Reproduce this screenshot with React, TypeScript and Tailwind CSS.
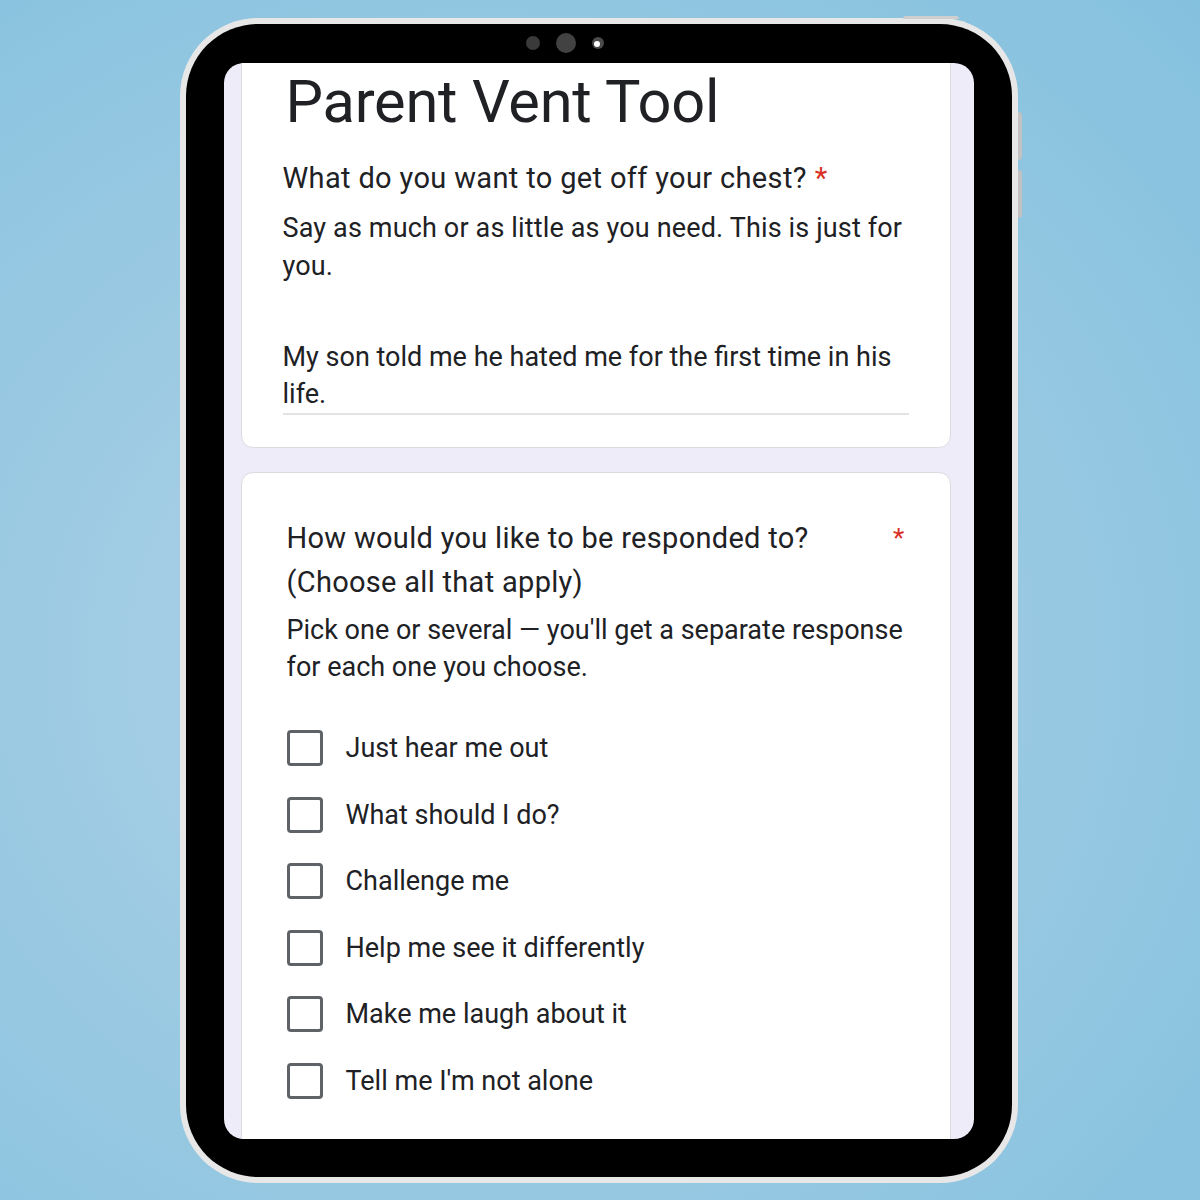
import React from 'react'

const options = [
  'Just hear me out',
  'What should I do?',
  'Challenge me',
  'Help me see it differently',
  'Make me laugh about it',
  "Tell me I'm not alone",
]

function Checkbox() {
  return <span className="block w-[36px] h-[36px] shrink-0 rounded-[4px] border-[3px] border-[#5f6368] bg-white" />
}

export default function App() {
  return (
    <div
      className="w-[1200px] h-[1200px] flex items-center justify-center bg-[radial-gradient(ellipse_at_40%_55%,#b2d3e7_0%,#9ccae3_45%,#84c1de_100%)]"
      style={{ fontFamily: 'Roboto, "Noto Sans", Arial, sans-serif' }}
    >
      <div className="relative w-[838px] h-[1165px] mt-[1px] mr-[3px] rounded-[78px] bg-[#e7e7e7] p-[6px]">
        {/* hardware buttons */}
        <span className="absolute right-[-4px] top-[94px] w-[4px] h-[48px] rounded-r bg-[#c2c2c2]" />
        <span className="absolute right-[-4px] top-[152px] w-[4px] h-[48px] rounded-r bg-[#c2c2c2]" />
        <span className="absolute left-[723px] top-[-2px] w-[56px] h-[3px] rounded-t bg-[#cfcfcf]" />

        <div className="relative w-full h-full rounded-[72px] bg-black px-[38px] pt-[39px] pb-[38px]">
          {/* camera */}
          <div className="absolute top-[9px] left-[340px] flex items-center gap-[16px]">
            <span className="block w-[14px] h-[14px] rounded-full bg-[#3a3a3a]" />
            <span className="block w-[20px] h-[20px] rounded-full bg-[#424242]" />
            <span className="flex items-center justify-center w-[12px] h-[12px] rounded-full bg-[#4a4a4a]">
              <span className="block w-[6px] h-[6px] rounded-full bg-white -ml-[1px] mt-[1px]" />
            </span>
          </div>

          <div className="w-full h-full overflow-hidden rounded-[20px] bg-[#eeecf9] pl-[17px] pr-[23px]">
            <div className="-mt-[30px] flex flex-col gap-[24px]">
              {/* card 1 */}
              <div className="rounded-[12px] bg-white border border-[#dadce0] pl-[41px] pr-[41px] pt-[33px] pb-[32px]">
                <h1 className="text-[59.5px] leading-[70px] text-[#202124] pl-[3px] tracking-[-0.2px]">Parent Vent Tool</h1>
                <div className="mt-[21px] text-[29px] leading-[40px] text-[#202124] tracking-[0.35px]">
                  What do you want to get off your chest?<span className="text-[#d93025] ml-[8px]">*</span>
                </div>
                <div className="mt-[11px] text-[27px] leading-[38px] text-[#202124] tracking-[0.15px]">
                  <span className="block whitespace-nowrap">Say as much or as little as you need. This is just for</span>
                  <span className="block">you.</span>
                </div>
                <div className="mt-[54px] text-[27px] leading-[37px] text-[#202124] tracking-[0px] border-b-2 border-[#e4e4e4]">
                  <span className="block whitespace-nowrap">My son told me he hated me for the first time in his</span>
                  <span className="block">life.</span>
                </div>
              </div>

              {/* card 2 */}
              <div className="rounded-[12px] bg-white border border-[#dadce0] pl-[45px] pr-[45px] pt-[43px] pb-[80px]">
                <div className="flex justify-between text-[29px] leading-[44px] text-[#202124] tracking-[0.3px]">
                  <div>
                    <span className="block whitespace-nowrap">How would you like to be responded to?</span>
                    <span className="block">(Choose all that apply)</span>
                  </div>
                  <span className="text-[#d93025] text-[26px]">*</span>
                </div>
                <div className="mt-[8px] text-[27px] leading-[37px] text-[#202124] tracking-[0px]">
                  <span className="block whitespace-nowrap">Pick one or several — you'll get a separate response</span>
                  <span className="block">for each one you choose.</span>
                </div>
                <div className="mt-[44px] flex flex-col gap-[30.6px]">
                  {options.map((o) => (
                    <label key={o} className="flex items-center gap-[23px]">
                      <Checkbox />
                      <span className="text-[27px] leading-[36px] text-[#202124] tracking-[0px]">{o}</span>
                    </label>
                  ))}
                </div>
              </div>
            </div>
          </div>
        </div>
      </div>
    </div>
  )
}
